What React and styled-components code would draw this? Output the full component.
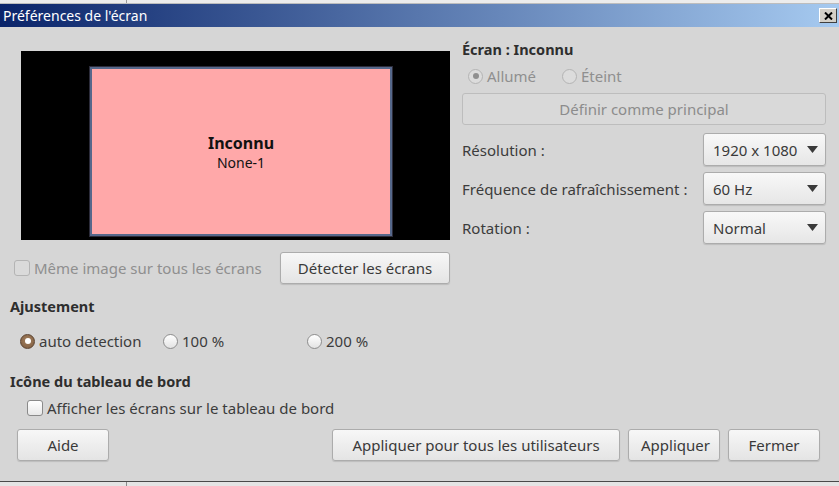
import React from "react";
import styled, { createGlobalStyle, css } from "styled-components";

const Global = createGlobalStyle`
  html, body {
    margin: 0;
    padding: 0;
    background: #d6d6d6;
    font-family: "Noto Sans", "DejaVu Sans", sans-serif;
    font-size: 15px;
    color: #3c3c3c;
  }
  * { box-sizing: border-box; }
`;

const Window = styled.div`
  width: 839px;
  height: 486px;
  display: flex;
  flex-direction: column;
  overflow: hidden;
  background: #d6d6d6;
`;

const TopStrip = styled.div`
  height: 4px;
  background: #ececec;
  border-bottom: 1px solid #bdbdbd;
  display: flex;
  span {
    width: 127px;
    border-right: 1px solid #9a9a9a;
  }
`;

const TitleBar = styled.div`
  height: 23px;
  display: flex;
  align-items: center;
  justify-content: space-between;
  padding: 0 2px 0 3px;
  background: linear-gradient(to right, #0a246a, #a6caf0);
  color: #ffffff;
  font-size: 14px;
`;

const CloseBox = styled.div`
  width: 18px;
  height: 15px;
  background: #d4d0c8;
  border: 1px solid;
  border-color: #ffffff #404040 #404040 #ffffff;
  display: flex;
  align-items: center;
  justify-content: center;
`;

const Body = styled.div`
  flex: 1;
  padding: 0 13px 0 10px;
  display: flex;
  flex-direction: column;
`;

const TopGrid = styled.div`
  display: grid;
  grid-template-columns: 440px 1fr;
  column-gap: 12px;
`;

const LeftCol = styled.div`
  display: flex;
  flex-direction: column;
`;

const Canvas = styled.div`
  position: relative;
  margin: 24px 0 0 11px;
  height: 189px;
  flex: none;
  background: #000;
`;

/* monitor tile sits on the arrangement canvas at its own place */
const Monitor = styled.div`
  position: absolute;
  left: 69px;
  right: 58px;
  top: 16px;
  bottom: 4px;
  background: #ffa8a9;
  border: 2px solid #56688b;
  box-shadow: 0 0 0 1px #2c2c3a;
  display: flex;
  flex-direction: column;
  align-items: center;
  justify-content: center;
  color: #111;
  padding-top: 2px;
`;

const MonitorName = styled.div`
  font-weight: bold;
  font-size: 16px;
  line-height: 20px;
`;

const MonitorId = styled.div`
  font-size: 14px;
  line-height: 20px;
`;

const DetectRow = styled.div`
  margin-top: 12px;
  display: flex;
  align-items: center;
  justify-content: space-between;
  padding-left: 4px;
`;

const RightCol = styled.div`
  display: flex;
  flex-direction: column;
  padding-top: 12px;
`;

const Heading = styled.div`
  font-weight: bold;
  font-size: 14.5px;
  color: #2e2e2e;
  line-height: 20px;
  ${(p) => p.$top && css`margin-top: ${p.$top}px;`}
`;

const RadioRow = styled.div`
  display: flex;
  align-items: center;
  height: 20px;
  margin-top: ${(p) => p.$top || 0}px;
  padding-left: ${(p) => p.$indent || 0}px;
`;

const Option = styled.label`
  display: flex;
  align-items: center;
  gap: 4px;
  width: ${(p) => (p.$w ? `${p.$w}px` : "auto")};
  color: ${(p) => (p.$disabled ? "#8f8f8f" : "#3c3c3c")};
  white-space: nowrap;
`;

const RadioDot = styled.span`
  width: 15px;
  height: 15px;
  border-radius: 50%;
  flex: none;
  position: relative;
  ${(p) =>
    p.$disabled
      ? css`
          border: 1px solid #b4b4b4;
          background: #dcdcdc;
        `
      : p.$checked
      ? css`
          border: 1px solid #5b4330;
          background: radial-gradient(circle at 50% 40%, #a3805e, #7d5b3f);
        `
      : css`
          border: 1px solid #8d8d8d;
          background: linear-gradient(#ffffff, #e3e3e3);
        `}
  ${(p) =>
    p.$checked &&
    css`
      &::after {
        content: "";
        position: absolute;
        left: 3.5px;
        top: 3.5px;
        width: 6px;
        height: 6px;
        border-radius: 50%;
        background: ${p.$disabled ? "#8f8f8f" : "#ffffff"};
      }
    `}
`;

const CheckBox = styled.span`
  width: 16px;
  height: 16px;
  flex: none;
  border-radius: 3px;
  border: 1px solid ${(p) => (p.$disabled ? "#b4b4b4" : "#8a8a8a")};
  background: ${(p) => (p.$disabled ? "#dadada" : "linear-gradient(#ffffff, #e8e8e8)")};
`;

const Button = styled.button`
  font-family: inherit;
  font-size: 15px;
  height: 32px;
  padding: 0 12px;
  border-radius: 3px;
  border: 1px solid ${(p) => (p.$disabled ? "#bdbdbd" : "#acacac")};
  background: ${(p) =>
    p.$disabled ? "#d9d9d9" : "linear-gradient(#f7f7f7, #e4e4e4)"};
  color: ${(p) => (p.$disabled ? "#8c8c8c" : "#3a3a3a")};
  box-shadow: ${(p) => (p.$disabled ? "none" : "0 1px 1px rgba(0,0,0,0.12)")};
  width: ${(p) => (p.$w ? `${p.$w}px` : "auto")};
  white-space: nowrap;
`;

const FieldRow = styled.div`
  display: flex;
  align-items: center;
  justify-content: space-between;
  margin-top: ${(p) => p.$top || 0}px;
`;

const Combo = styled.div`
  width: 123px;
  height: 33px;
  border-radius: 3px;
  border: 1px solid #acacac;
  background: linear-gradient(#f8f8f8, #e6e6e6);
  box-shadow: 0 1px 1px rgba(0,0,0,0.12);
  display: flex;
  align-items: center;
  justify-content: space-between;
  padding: 0 7px 0 9px;
  color: #3a3a3a;
`;

const Arrow = () => (
  <svg width="11" height="7" viewBox="0 0 11 7">
    <path d="M0 0h11L5.5 7z" fill="#3a3a3a" />
  </svg>
);

const ButtonBar = styled.div`
  display: flex;
  align-items: center;
  margin-top: 11px;
  padding: 0 6px 0 7px;
  gap: 8px;
  & > :first-child {
    margin-right: auto;
  }
`;

const Footer = styled.div`
  margin-top: auto;
  height: 5px;
  border-top: 1px solid #4a4a4a;
  background: #e4e4e4;
  display: flex;
  span {
    width: 127px;
    border-right: 1px solid #8a8a8a;
  }
`;

export default function App() {
  return (
    <Window>
      <Global />
      <TopStrip>
        <span />
      </TopStrip>
      <TitleBar>
        <span>Préférences de l'écran</span>
        <CloseBox>
          <svg width="9" height="8" viewBox="0 0 9 8">
            <path d="M1 0.5l7 7M8 0.5l-7 7" stroke="#000" strokeWidth="2" />
          </svg>
        </CloseBox>
      </TitleBar>
      <Body>
        <TopGrid>
          <LeftCol>
            <Canvas>
              <Monitor>
                <MonitorName>Inconnu</MonitorName>
                <MonitorId>None-1</MonitorId>
              </Monitor>
            </Canvas>
            <DetectRow>
              <Option $disabled>
                <CheckBox $disabled />
                Même image sur tous les écrans
              </Option>
              <Button $w={170}>Détecter les écrans</Button>
            </DetectRow>
          </LeftCol>
          <RightCol>
            <Heading>Écran : Inconnu</Heading>
            <RadioRow $top={7} $indent={6}>
              <Option $disabled $w={94}>
                <RadioDot $disabled $checked />
                Allumé
              </Option>
              <Option $disabled>
                <RadioDot $disabled />
                Éteint
              </Option>
            </RadioRow>
            <Button $disabled style={{ marginTop: 7 }}>
              Définir comme principal
            </Button>
            <FieldRow $top={8}>
              <span>Résolution :</span>
              <Combo>
                1920 x 1080
                <Arrow />
              </Combo>
            </FieldRow>
            <FieldRow $top={6}>
              <span>Fréquence de rafraîchissement :</span>
              <Combo>
                60 Hz
                <Arrow />
              </Combo>
            </FieldRow>
            <FieldRow $top={6}>
              <span>Rotation :</span>
              <Combo>
                Normal
                <Arrow />
              </Combo>
            </FieldRow>
          </RightCol>
        </TopGrid>

        <Heading $top={12}>Ajustement</Heading>
        <RadioRow $top={15} $indent={10}>
          <Option $w={143}>
            <RadioDot $checked />
            auto detection
          </Option>
          <Option $w={144}>
            <RadioDot />
            100 %
          </Option>
          <Option>
            <RadioDot />
            200 %
          </Option>
        </RadioRow>

        <Heading $top={20}>Icône du tableau de bord</Heading>
        <RadioRow $top={7} $indent={17}>
          <Option>
            <CheckBox />
            Afficher les écrans sur le tableau de bord
          </Option>
        </RadioRow>

        <ButtonBar>
          <Button $w={92}>Aide</Button>
          <Button $w={288}>Appliquer pour tous les utilisateurs</Button>
          <Button $w={92}>Appliquer</Button>
          <Button $w={92}>Fermer</Button>
        </ButtonBar>
      </Body>
      <Footer>
        <span />
      </Footer>
    </Window>
  );
}
